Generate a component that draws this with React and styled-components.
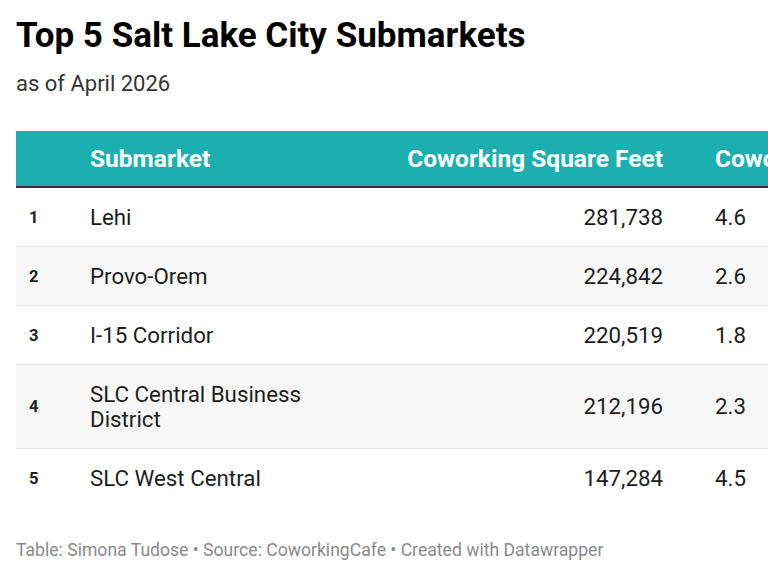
import React from "react";
import styled, { createGlobalStyle } from "styled-components";

const Global = createGlobalStyle`
  html, body { margin: 0; padding: 0; background: #fff; }
  body { font-family: Roboto, "Liberation Sans", sans-serif; color: #181818; overflow: hidden; }
`;

const Page = styled.div`
  width: 768px;
  height: 576px;
  overflow: hidden;
  padding: 16px 0 0 16px;
  box-sizing: border-box;
`;

const Title = styled.h1`
  margin: 0;
  font-size: 35px;
  line-height: 40px;
  font-weight: 700;
  color: #000;
  white-space: nowrap;
`;

const Subtitle = styled.p`
  margin: 14px 0 0;
  font-size: 22px;
  line-height: 28px;
  color: #333;
`;

const Table = styled.div`
  margin-top: 33px;
  width: 1000px;
`;

const Row = styled.div`
  display: grid;
  grid-template-columns: 74px 240px 333px 52px 301px;
  align-items: center;
  background: ${(p) => (p.$head ? "#1bb0af" : p.$striped ? "#f7f7f7" : "#fff")};
  border-bottom: ${(p) => (p.$head ? "2px solid #333" : p.$last ? "none" : "1px solid #e6e6e6")};
  min-height: ${(p) => (p.$head ? "57px" : "auto")};
  box-sizing: border-box;
`;

const Cell = styled.div`
  font-size: ${(p) => (p.$head ? "24.5px" : "22.3px")};
  line-height: 25px;
  font-weight: ${(p) => (p.$head ? 700 : 400)};
  color: ${(p) => (p.$head ? "#fff" : "#1d1d1d")};
  text-align: ${(p) => (p.$right ? "right" : "left")};
  padding: ${(p) => (p.$head ? "14px 0" : "16.5px 0")};
  white-space: ${(p) => (p.$wrap ? "normal" : "nowrap")};
`;

const Rank = styled.div`
  font-size: 16.5px;
  font-weight: 700;
  color: #222;
  padding-left: 13px;
`;

const Spacer = styled.div``;

const Footer = styled.p`
  margin: 32px 0 0;
  font-size: 17.6px;
  line-height: 22px;
  color: #8a8a8a;
  white-space: nowrap;
`;

const rows = [
  ["Lehi", "281,738", "4.6"],
  ["Provo-Orem", "224,842", "2.6"],
  ["I-15 Corridor", "220,519", "1.8"],
  ["SLC Central Business District", "212,196", "2.3"],
  ["SLC West Central", "147,284", "4.5"],
];

export default function App() {
  return (
    <Page>
      <Global />
      <Title>Top 5 Salt Lake City Submarkets</Title>
      <Subtitle>as of April 2026</Subtitle>
      <Table>
        <Row $head>
          <Spacer />
          <Cell $head>Submarket</Cell>
          <Cell $head $right>Coworking Square Feet</Cell>
          <Spacer />
          <Cell $head>Coworking Share of Office Stock</Cell>
        </Row>
        {rows.map((r, i) => (
          <Row key={r[0]} $striped={i % 2 === 1} $last={i === rows.length - 1}>
            <Rank>{i + 1}</Rank>
            <Cell $wrap>{r[0]}</Cell>
            <Cell $right>{r[1]}</Cell>
            <Spacer />
            <Cell>{r[2]}</Cell>
          </Row>
        ))}
      </Table>
      <Footer>Table: Simona Tudose • Source: CoworkingCafe • Created with Datawrapper</Footer>
    </Page>
  );
}
